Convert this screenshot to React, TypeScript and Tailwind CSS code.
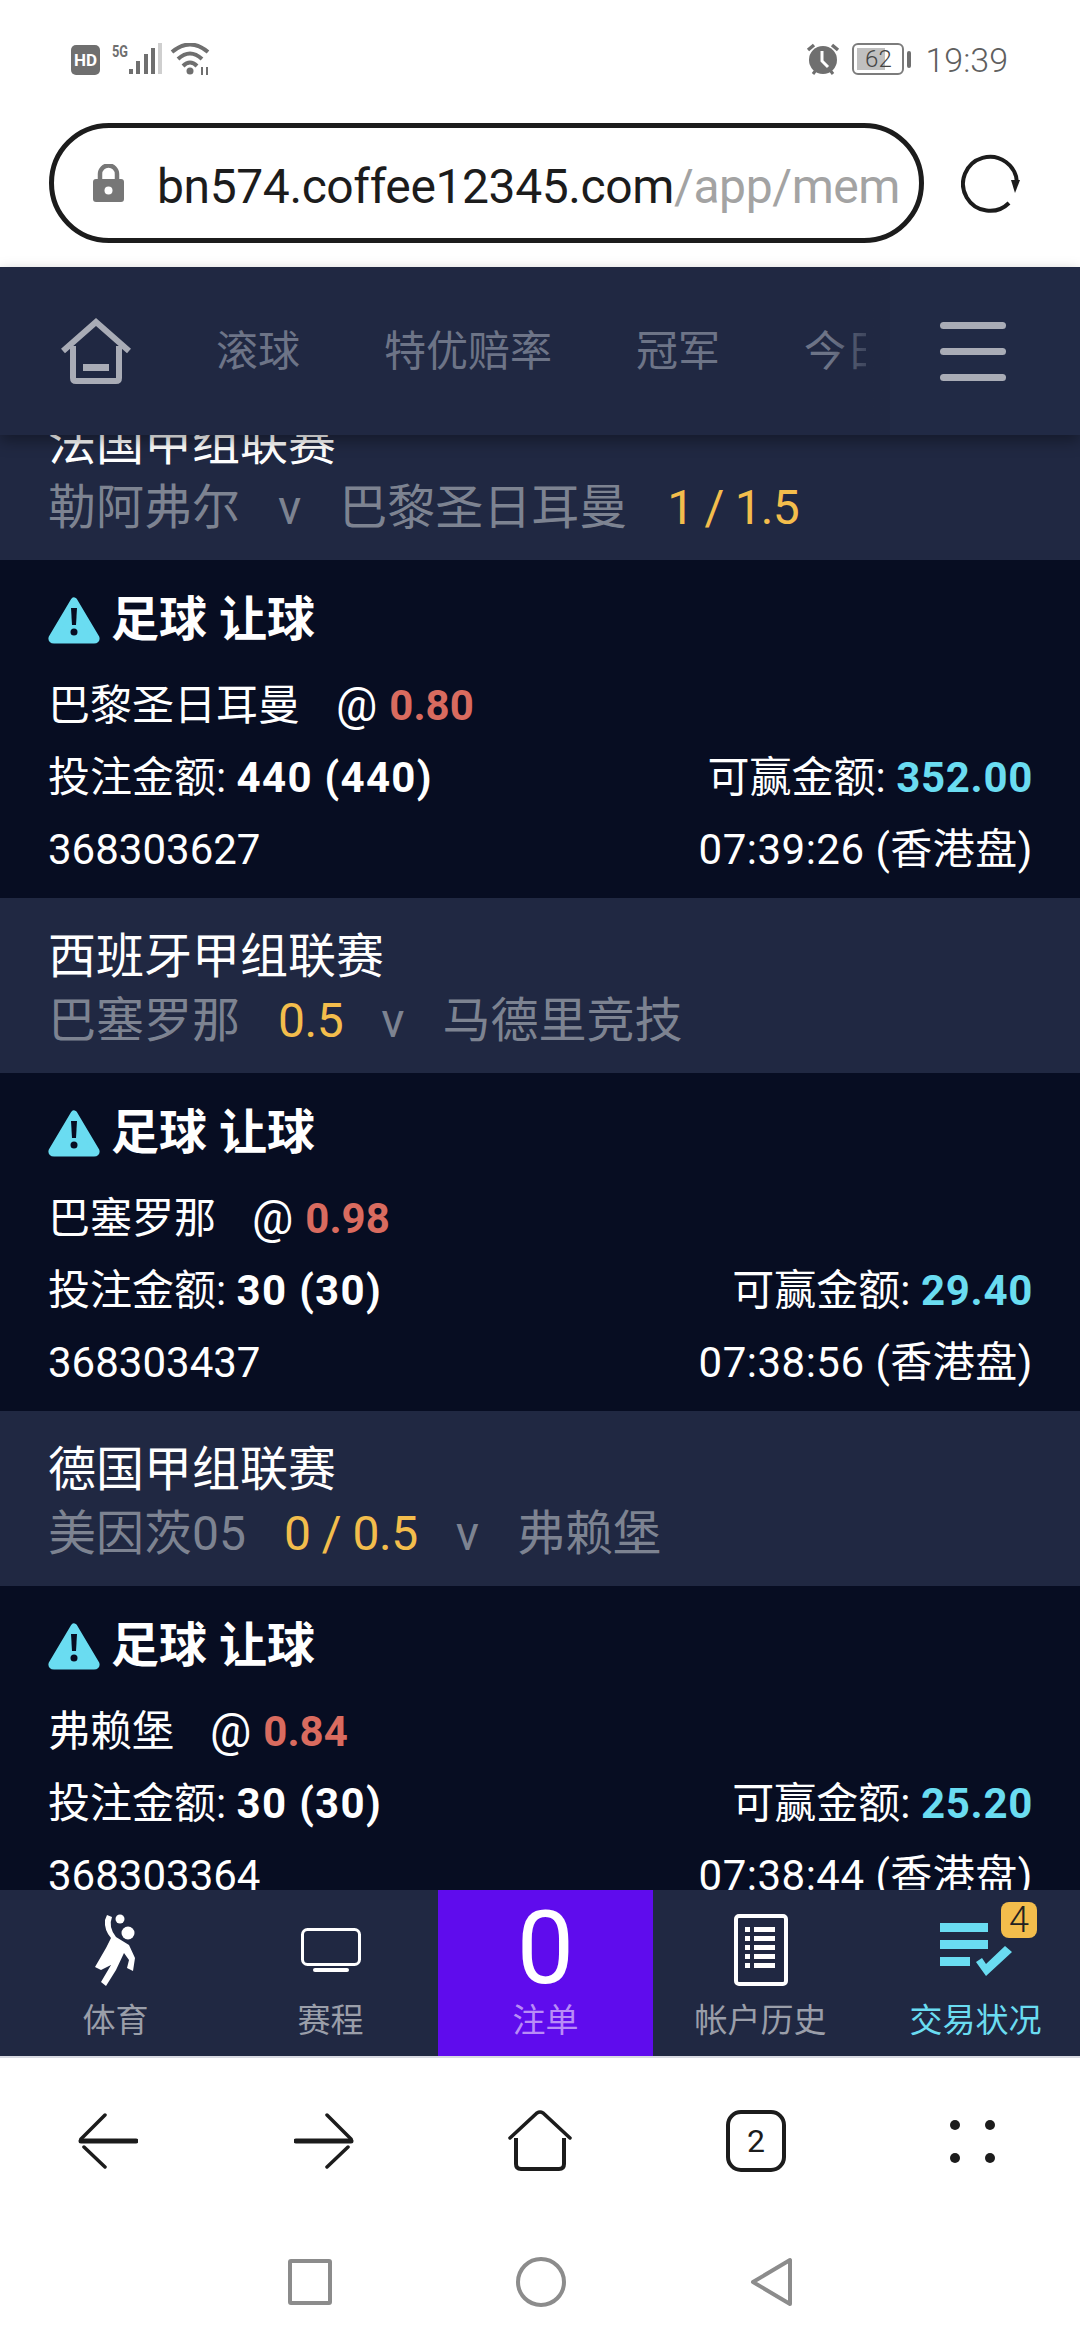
const FONT = "font-['Roboto','Noto_Sans_CJK_SC',sans-serif]";

const StatusBar = () => (
  <div className={`h-[100px] bg-white flex items-start justify-between pl-[71px] pr-[72px] pt-[43px] text-[#6f6f6f] ${FONT}`}>
    <svg width="142" height="33" viewBox="0 0 142 33">
      <rect x="0" y="2" width="29" height="30" rx="5" fill="#6f6f6f" />
      <text x="14.5" y="23" textAnchor="middle" fontSize="17" fontWeight="700" fill="#fff" fontFamily="Roboto">HD</text>
      <text x="41" y="14" fontSize="16" fontWeight="700" fill="#6f6f6f" fontFamily="Roboto" textLength="16" lengthAdjust="spacingAndGlyphs">5G</text>
      <rect x="58" y="26" width="4" height="5" fill="#6f6f6f" />
      <rect x="65" y="18" width="4" height="13" fill="#6f6f6f" />
      <rect x="73" y="11" width="4" height="20" fill="#6f6f6f" />
      <rect x="80" y="5" width="4" height="26" fill="#6f6f6f" />
      <rect x="87" y="0" width="4" height="31" fill="#cfcfcf" />
      <path d="M101 9 Q119 -6 137 9 M107 16 Q119 5 131 16 M112 23 Q119 16 126 23" stroke="#6f6f6f" strokeWidth="4" fill="none" />
      <circle cx="119" cy="28" r="3.5" fill="#6f6f6f" />
      <path d="M131 32v-8M136 32v-8" stroke="#6f6f6f" strokeWidth="2" />
    </svg>
    <div className="flex items-start">
      <svg width="34" height="32" viewBox="0 0 34 32">
        <circle cx="17" cy="17" r="14" fill="#6f6f6f" />
        <path d="M16 8v10l6 6" stroke="#fff" strokeWidth="3" fill="none" />
        <path d="M2 7l6-5M32 7l-6-5" stroke="#6f6f6f" strokeWidth="3.5" />
        <path d="M7 31l3-4M27 31l-3-4" stroke="#6f6f6f" strokeWidth="3" />
      </svg>
      <div className="ml-[12px] flex items-center gap-[3px]">
        <div className="relative w-[52px] h-[32px] border-2 border-[#7c7c7c] rounded-[6px] p-[3px]">
          <div className="h-full w-[66%] bg-[#c0c0c0]" />
          <span className="absolute inset-0 flex items-center justify-center text-[24px] leading-none font-light text-[#444]">62</span>
        </div>
        <div className="w-[4px] h-[17px] bg-[#6f6f6f] rounded-sm" />
      </div>
      <span className="ml-[14px] text-[34px] leading-[34px] font-light text-[#5f5f5f]">19:39</span>
    </div>
  </div>
);

const UrlBar = () => (
  <div className="h-[167px] bg-white flex items-start pl-[49px] pt-[23px]">
    <div className={`w-[875px] h-[120px] rounded-[60px] border-[5px] border-[#1c1c1c] flex items-center pl-[39px] ${FONT}`}>
      <svg className="shrink-0" width="31" height="38" viewBox="0 0 31 38">
        <path d="M7 17 V10 a8.5 8.5 0 0 1 17 0 V17" fill="none" stroke="#777" strokeWidth="4.5" />
        <rect x="0" y="15" width="31" height="23" rx="3" fill="#777" />
        <circle cx="15.5" cy="26.5" r="4" fill="#fff" />
      </svg>
      <span className="ml-[33px] pt-[7px] text-[48px] leading-none whitespace-nowrap tracking-[-0.4px]">
        <span className="text-[#1c1c1c]">bn574.coffee12345.com</span>
        <span className="text-[#a3a3a3]">/app/mem</span>
      </span>
    </div>
    <svg className="ml-[37px] mt-[30px]" width="60" height="60" viewBox="0 0 60 60" fill="none">
      <path d="M48 50 A27 27 0 1 1 56 30" stroke="#1c1c1c" strokeWidth="4" />
      <path d="M50 27 L59 27 L54 40 Z" fill="#1c1c1c" />
    </svg>
  </div>
);

const NavBar = () => (
  <div className="relative z-10 h-[168px] shrink-0 bg-[#202842] flex items-center shadow-[0_6px_14px_rgba(0,0,0,0.35)]">
    <svg className="ml-[60px] shrink-0" width="72" height="66" viewBox="0 0 72 66" fill="none" stroke="#a9acb6">
      <path d="M3 33 L36 4 L69 33" strokeWidth="6" />
      <path d="M13 28 V60 Q13 63 16 63 H56 Q59 63 59 60 V28" strokeWidth="6" />
      <rect x="23" y="46" width="26" height="7" fill="#a9acb6" stroke="none" />
    </svg>
    <div className={`ml-[84px] w-[650px] overflow-hidden flex gap-[84px] text-[42px] text-[#6d7487] whitespace-nowrap ${FONT}`}>
      <span>滚球</span>
      <span>特优赔率</span>
      <span>冠军</span>
      <span>今日</span>
    </div>
    <div className="absolute left-[830px] top-0 bottom-0 w-[60px] bg-gradient-to-r from-transparent to-[#202842]" />
    <div className="absolute right-0 top-0 bottom-0 w-[190px] bg-[#212a45] flex flex-col items-end justify-center gap-[19px] pr-[74px]">
      <div className="w-[66px] h-[7px] rounded bg-[#a9acb6]" />
      <div className="w-[66px] h-[7px] rounded bg-[#a9acb6]" />
      <div className="w-[66px] h-[7px] rounded bg-[#a9acb6]" />
    </div>
  </div>
);

const Warning = () => (
  <svg width="52" height="48" viewBox="0 0 52 48">
    <path d="M26 5 L48 42 Q48.5 44 46 44 H6 Q3.5 44 4 42 Z" fill="#6adcf1" stroke="#6adcf1" strokeWidth="7" strokeLinejoin="round" />
    <path d="M23 12 H29 L28 29 H24 Z" fill="#070d22" />
    <circle cx="26" cy="36" r="3.5" fill="#070d22" />
  </svg>
);

const League = ({ name, home, away, line, lineFirst }: { name: string; home: string; away: string; line: string; lineFirst?: boolean }) => (
  <div className="h-[175px] bg-[#202842] pl-[48px] pt-[27px]">
    <div className="text-[48px] leading-[64px] text-white">{name}</div>
    <div className="text-[48px] leading-[64px] text-[#7d8391] flex whitespace-nowrap">
      <span>{home}</span>
      {lineFirst && <span className="ml-[38px] text-[#f3bd4c] tracking-[-0.5px]">{line}</span>}
      <span className="mx-[38px]">v</span>
      <span>{away}</span>
      {!lineFirst && <span className="ml-[40px] text-[#f3bd4c] tracking-[-0.8px]">{line}</span>}
    </div>
  </div>
);

const Bet = ({ team, odds, stake, win, id, time }: { team: string; odds: string; stake: string; win: string; id: string; time: string }) => (
  <div className="h-[338px] bg-[#070d22] pl-[48px] pr-[47px] pt-[30px] text-white text-[42px]">
    <div className="flex items-center h-[60px]">
      <Warning />
      <span className="ml-[11px] text-[48px] font-bold leading-none">足球 让球</span>
    </div>
    <div className="mt-[19px] h-[72px] flex items-center">
      <span>{team}</span>
      <span className="ml-[36px] text-[46px]">@</span>
      <span className="ml-[12px] font-bold text-[#d96b5f]">{odds}</span>
    </div>
    <div className="h-[72px] flex items-center justify-between">
      <span>投注金额: <b className="tracking-[1.3px]">{stake}</b></span>
      <span>可赢金额: <b className="text-[#6adcf1] tracking-[0.7px]">{win}</b></span>
    </div>
    <div className="h-[72px] flex items-center justify-between">
      <span>{id}</span>
      <span className="tracking-[0.5px]">{time} (香港盘)</span>
    </div>
  </div>
);

const Tab = ({ label, children }: { label: string; children: React.ReactNode }) => (
  <div className="flex flex-col items-center">
    <div className="mt-[20px] h-[76px] flex items-center justify-center">{children}</div>
    <div className="mt-[15px] text-[33px] leading-[40px] text-[#9a9ea9]">{label}</div>
  </div>
);

const TabBar = () => (
  <div className={`h-[166px] shrink-0 overflow-hidden grid grid-cols-[repeat(5,215px)] pl-[8px] bg-[#202842] ${FONT}`}>
    <Tab label="体育">
      <svg width="41" height="76" viewBox="0 0 41 76" fill="#fff">
        <circle cx="25" cy="9" r="4.5" />
        <circle cx="33" cy="23" r="6.5" />
        <path d="M12 5 L17 7 Q13 17 21 27 L34 35 L40 48 L38 61 L32 58 L34 50 L29 43 L21 60 L11 76 L6 72 L16 55 L6 60 L0 57 L11 38 L16 28 Q9 20 10 10 Z" />
      </svg>
    </Tab>
    <Tab label="赛程">
      <svg width="60" height="76" viewBox="0 0 60 76" fill="none">
        <rect x="1.5" y="19.5" width="57" height="35" rx="5" stroke="#fff" strokeWidth="3" />
        <rect x="12" y="58" width="36" height="4" rx="2" fill="#fff" />
      </svg>
    </Tab>
    <div className="bg-[#5f0ced] flex flex-col items-center">
      <div className="mt-[20px] h-[76px] text-[102px] leading-[76px] text-white">0</div>
      <div className="mt-[15px] text-[33px] leading-[40px] text-[#b98cf7]">注单</div>
    </div>
    <Tab label="帐户历史">
      <svg width="54" height="76" viewBox="0 0 54 76" fill="none">
        <rect x="2" y="6" width="50" height="68" rx="3" stroke="#fff" strokeWidth="4" />
        <g fill="#fff">
          <rect x="11" y="17" width="5" height="5" /><rect x="20" y="17" width="21" height="5" />
          <rect x="11" y="26" width="5" height="5" /><rect x="20" y="26" width="21" height="5" />
          <rect x="11" y="35" width="5" height="5" /><rect x="20" y="35" width="21" height="5" />
          <rect x="11" y="44" width="5" height="5" /><rect x="20" y="44" width="21" height="5" />
          <rect x="11" y="53" width="5" height="5" /><rect x="20" y="53" width="21" height="5" />
        </g>
      </svg>
    </Tab>
    <div className="relative flex flex-col items-center text-[#6adcf1]">
      <svg className="mt-[24px]" width="72" height="62" viewBox="0 0 72 62" fill="#6adcf1">
        <rect x="0" y="9" width="48" height="9" />
        <rect x="0" y="26" width="48" height="9" />
        <rect x="0" y="43" width="30" height="9" />
        <path d="M36 48 L46 62 L72 38 L65 32 L46 50 L42 44 Z" />
      </svg>
      <div className="mt-[25px] text-[33px] leading-[40px]">交易状况</div>
      <div className="absolute right-[46px] top-[12px] w-[36px] h-[36px] rounded-[8px] bg-[#f3bd4c] flex items-center justify-center text-[36px] font-light leading-none text-[#222]">4</div>
    </div>
  </div>
);

const BrowserBar = () => (
  <div className="h-[284px] shrink-0 bg-white border-t-2 border-[#d8dae2]">
    <div className="h-[166px] grid grid-cols-5 items-center">
      <div className="flex justify-center">
        <svg width="60" height="56" viewBox="0 0 60 56" fill="none" stroke="#1c1c1c">
          <path d="M3 28 H58" strokeWidth="5" strokeLinecap="round" />
          <path d="M27 2 L3 26 M6 34 L27 54" strokeWidth="3.5" strokeLinecap="round" />
        </svg>
      </div>
      <div className="flex justify-center">
        <svg width="60" height="56" viewBox="0 0 60 56" fill="none" stroke="#1c1c1c">
          <path d="M2 28 H57" strokeWidth="5" strokeLinecap="round" />
          <path d="M33 2 L57 26 M54 34 L33 54" strokeWidth="3.5" strokeLinecap="round" />
        </svg>
      </div>
      <div className="flex justify-center">
        <svg width="64" height="62" viewBox="0 0 64 62" fill="none" stroke="#1c1c1c">
          <path d="M2 28 L29 3 Q32 1 35 3 L62 28" strokeWidth="3.5" strokeLinecap="round" />
          <path d="M8 28 V54 Q8 59 13 59 H51 Q56 59 56 54 V28" strokeWidth="4" />
        </svg>
      </div>
      <div className="flex justify-center">
        <div className={`w-[60px] h-[62px] rounded-[15px] border-[4px] border-[#1c1c1c] flex items-center justify-center text-[32px] leading-none text-[#1c1c1c] ${FONT}`}>2</div>
      </div>
      <div className="grid grid-cols-2 gap-x-[25px] gap-y-[23px] w-max justify-self-center">
        <div className="w-[10px] h-[10px] rounded-full bg-[#1c1c1c]" />
        <div className="w-[10px] h-[10px] rounded-full bg-[#1c1c1c]" />
        <div className="w-[10px] h-[10px] rounded-full bg-[#1c1c1c]" />
        <div className="w-[10px] h-[10px] rounded-full bg-[#1c1c1c]" />
      </div>
    </div>
    <div className="h-[116px] flex justify-center items-center gap-[184px]">
      <div className="w-[44px] h-[46px] border-[4px] border-[#8c8c8c] rounded-[3px]" />
      <div className="w-[50px] h-[50px] border-[4px] border-[#8c8c8c] rounded-full" />
      <svg width="42" height="50" viewBox="0 0 42 50" fill="none">
        <path d="M40 3 V47 L3 25 Z" stroke="#8c8c8c" strokeWidth="4" strokeLinejoin="round" />
      </svg>
    </div>
  </div>
);

export default function App() {
  return (
    <div className={`w-[1080px] h-[2340px] flex flex-col overflow-hidden bg-white ${FONT}`}>
      <StatusBar />
      <UrlBar />
      <NavBar />
      <div className="flex-1 overflow-hidden min-h-0">
        <div className="-mt-[50px]">
          <League name="法国甲组联赛" home="勒阿弗尔" away="巴黎圣日耳曼" line="1 / 1.5" />
          <Bet team="巴黎圣日耳曼" odds="0.80" stake="440 (440)" win="352.00" id="368303627" time="07:39:26" />
          <League name="西班牙甲组联赛" home="巴塞罗那" away="马德里竞技" line="0.5" lineFirst />
          <Bet team="巴塞罗那" odds="0.98" stake="30 (30)" win="29.40" id="368303437" time="07:38:56" />
          <League name="德国甲组联赛" home="美因茨05" away="弗赖堡" line="0 / 0.5" lineFirst />
          <Bet team="弗赖堡" odds="0.84" stake="30 (30)" win="25.20" id="368303364" time="07:38:44" />
        </div>
      </div>
      <TabBar />
      <BrowserBar />
    </div>
  );
}
